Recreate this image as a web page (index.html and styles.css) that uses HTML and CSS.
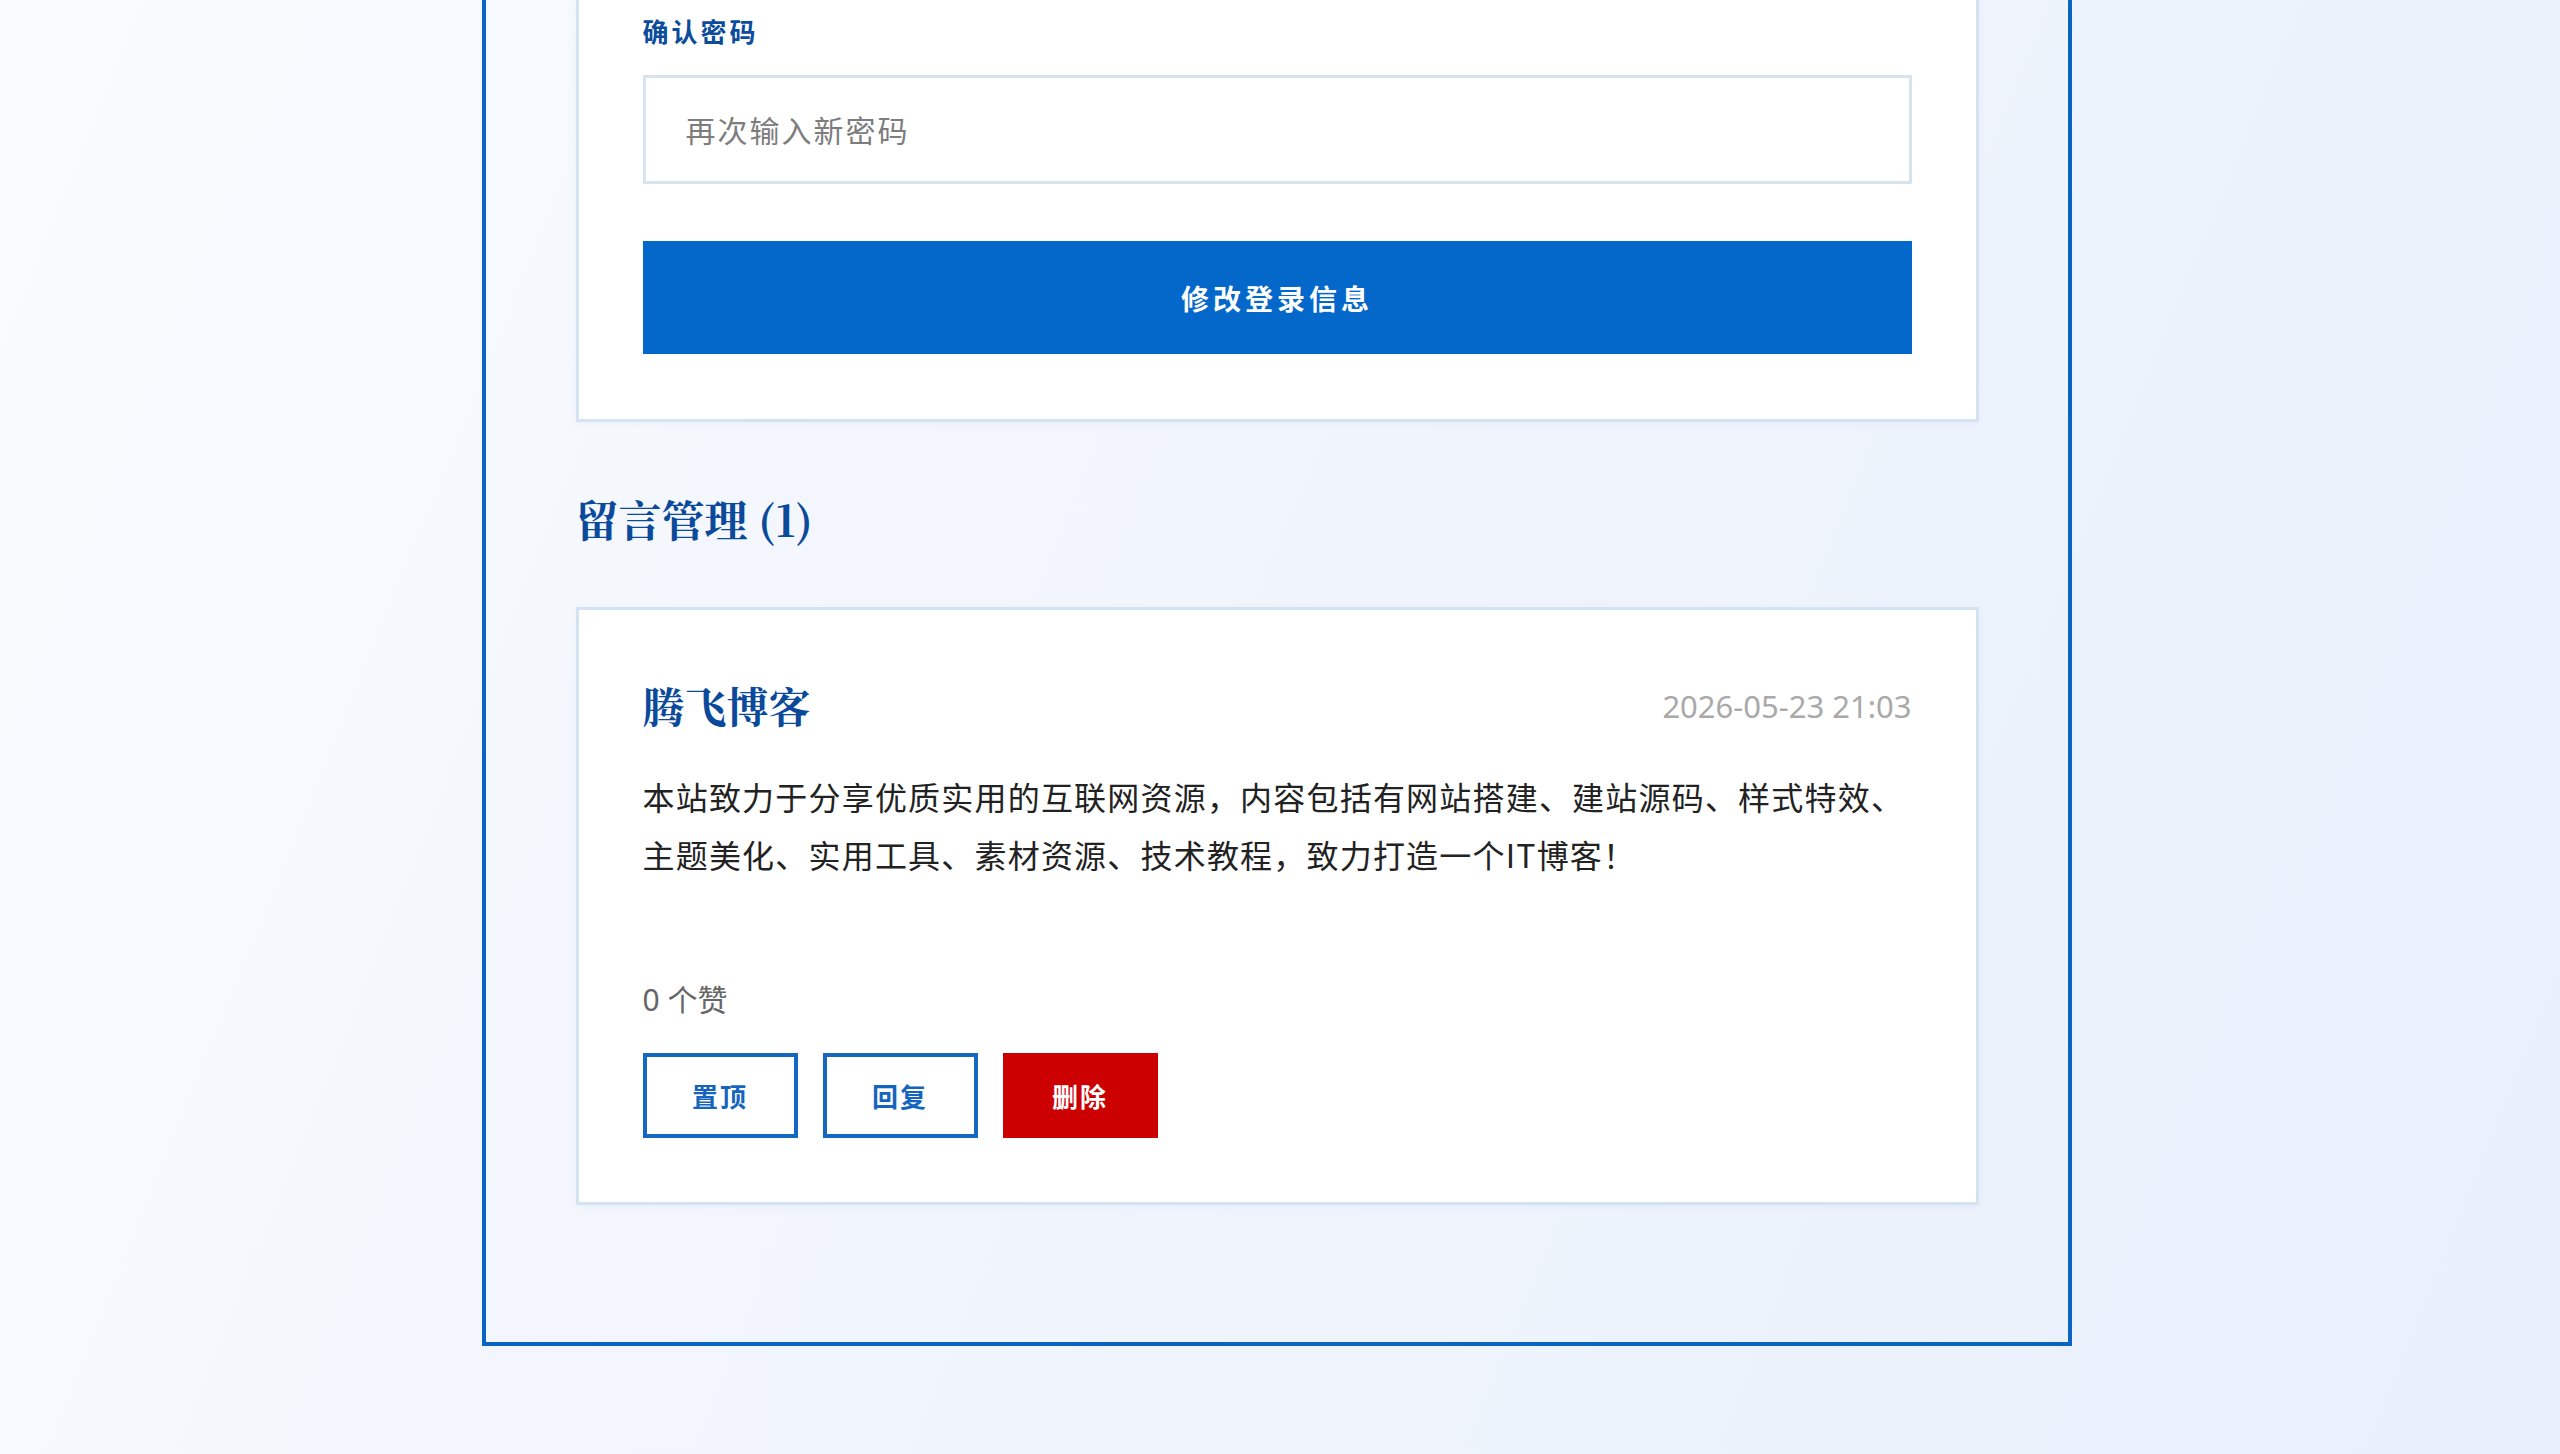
FILE: index.html
```html
<!DOCTYPE html>
<html lang="zh-CN">
<head>
<meta charset="utf-8">
<title>留言管理</title>
<link rel="stylesheet" href="styles.css">
</head>
<body>
<div class="page">
  <main class="panel">
    <section class="card form-card">
      <label class="field-label" for="confirm">确认密码</label>
      <input id="confirm" class="text-input" type="password" placeholder="再次输入新密码">
      <button class="primary-btn" type="button">修改登录信息</button>
    </section>

    <h2 class="section-title">留言管理 (1)</h2>

    <article class="card comment-card">
      <header class="comment-head">
        <h3 class="comment-author">腾飞博客</h3>
        <time class="comment-time">2026-05-23 21:03</time>
      </header>
      <p class="comment-body">本站致力于分享优质实用的互联网资源，内容包括有网站搭建、建站源码、样式特效、主题美化、实用工具、素材资源、技术教程，致力打造一个IT博客！</p>
      <div class="likes">0 个赞</div>
      <div class="actions">
        <button class="btn btn-outline" type="button">置顶</button>
        <button class="btn btn-outline" type="button">回复</button>
        <button class="btn btn-danger" type="button">删除</button>
      </div>
    </article>
  </main>
</div>
</body>
</html>
```

FILE: styles.css
```css
html, body {
  margin: 0;
  padding: 0;
}

html {
  min-height: 100%;
  background: linear-gradient(112deg, #f9fbfe 0%, #f1f5fc 45%, #e8f0fc 100%);
}

body {
  min-height: 1454px;
  font-family: "Noto Sans", "Noto Sans CJK SC", sans-serif;
  color: #222;
}

.page {
  display: flex;
  justify-content: center;
  padding-right: 7px;
}

.panel {
  width: 1590px;
  box-sizing: border-box;
  border: 4px solid #0a64c2;
  border-top: none;
  padding: 0 89px 137px 90px;
}

.card {
  background: #fff;
  border: 3px solid #d3e3f1;
  box-shadow: 0 2px 8px rgba(30, 80, 140, 0.04);
}

.form-card {
  border-top: none;
  padding: 13px 64px 65px 64px;
}

.field-label {
  display: block;
  font-family: "Noto Sans CJK SC", sans-serif;
  font-size: 26px;
  line-height: 36px;
  font-weight: 700;
  letter-spacing: 3px;
  color: #0c4c9c;
  margin-bottom: 26px;
}

.text-input {
  display: block;
  width: 100%;
  height: 109px;
  box-sizing: border-box;
  border: 3px solid #d6e4ef;
  background: #fff;
  padding: 0 40px 2px;
  font-family: "Noto Sans CJK SC", sans-serif;
  font-size: 30px;
  letter-spacing: 2px;
  color: #333;
  outline: none;
}

.text-input::placeholder {
  color: #7d7d7d;
}

.primary-btn {
  display: block;
  width: 100%;
  height: 113px;
  margin-top: 57px;
  border: none;
  background: #0467ca;
  color: #fff;
  font-family: "Noto Sans CJK SC", sans-serif;
  font-size: 28px;
  font-weight: 700;
  letter-spacing: 4px;
  cursor: pointer;
}

.section-title {
  margin: 71px 0 62px;
  font-family: "Noto Serif CJK SC", "Liberation Serif", "Noto Sans CJK SC", serif;
  font-size: 43px;
  line-height: 52px;
  font-weight: 700;
  color: #0b4a9b;
}

.comment-card {
  padding: 64px;
}

.comment-head {
  display: flex;
  align-items: center;
  justify-content: space-between;
}

.comment-author {
  margin: 0;
  font-family: "Noto Serif CJK SC", "Liberation Serif", "Noto Sans CJK SC", serif;
  font-size: 42px;
  line-height: 63px;
  font-weight: 700;
  color: #0b4a9b;
}

.comment-time {
  font-size: 31px;
  color: #a9a9a9;
}

.comment-body {
  margin: 30px 0 0;
  font-family: "Noto Sans CJK SC", sans-serif;
  font-size: 32px;
  letter-spacing: 1.2px;
  line-height: 58px;
  color: #222;
}

.likes {
  margin-top: 94px;
  font-size: 30px;
  line-height: 45px;
  color: #666;
}

.actions {
  display: flex;
  gap: 25px;
  margin-top: 31px;
}

.btn {
  width: 155px;
  height: 85px;
  box-sizing: border-box;
  display: inline-flex;
  align-items: center;
  justify-content: center;
  font-family: "Noto Sans CJK SC", sans-serif;
  font-size: 26px;
  font-weight: 700;
  letter-spacing: 2px;
  padding: 0;
  cursor: pointer;
}

.btn-outline {
  background: #fff;
  border: 4px solid #1468c0;
  color: #1565c0;
}

.btn-danger {
  background: #cc0000;
  border: none;
  color: #fff;
}
```
